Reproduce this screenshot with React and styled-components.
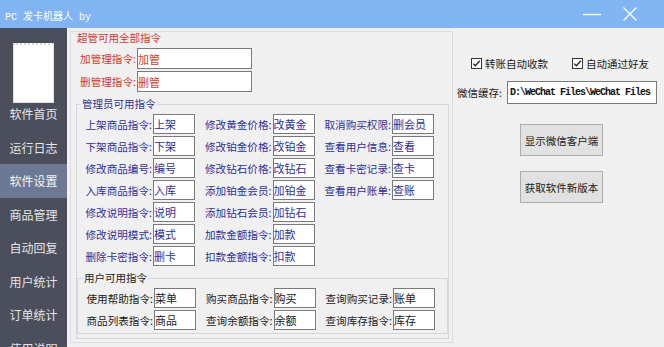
import styled, { createGlobalStyle } from 'styled-components';

const GlobalStyle = createGlobalStyle`
  html, body {
    margin: 0;
    padding: 0;
    background: #f0f0f0;
  }
  body {
    font-family: "Noto Sans CJK SC", "Noto Sans", sans-serif;
  }
`;

const TONES = {
  red: '#d03a2c',
  navy: '#2f2f98',
  plain: '#1a1a1a',
};

const Window = styled.div`
  width: 664px;
  height: 347px;
  display: flex;
  flex-direction: column;
  overflow: hidden;
  background: #f0f0f0;
`;

const TitleBar = styled.div`
  height: 28px;
  flex: none;
  display: flex;
  align-items: center;
  padding-left: 5px;
  background: #80b4f2;
  color: #fff;
`;

const Title = styled.div`
  flex: 1;
  padding-top: 3px;
  font-family: "Liberation Mono", "Noto Sans CJK SC", monospace;
  font-size: 10px;
  white-space: pre;
`;

const WinButtons = styled.div`
  display: flex;
  align-items: center;
  gap: 22px;
  padding-right: 27px;
`;

const Body = styled.div`
  flex: 1;
  display: flex;
  min-height: 0;
`;

const Sidebar = styled.nav`
  width: 67px;
  flex: none;
  display: flex;
  flex-direction: column;
  background: #4b4f5b;
`;

const Logo = styled.div`
  width: 41px;
  height: 60px;
  flex: none;
  margin: 15px 0 -6px 13px;
  box-sizing: border-box;
  background: #fff;
  border: 1px solid #e2e2e2;
  border-top: 2px dotted #d8d8d8;
`;

const NavItem = styled.div`
  height: 33.5px;
  flex: none;
  display: flex;
  align-items: center;
  justify-content: center;
  font-size: 12px;
  color: ${(p) => (p.$active ? '#f4f6fa' : '#e3e5ea')};
  background: ${(p) => (p.$active ? '#6c7994' : 'transparent')};
`;

const Main = styled.div`
  flex: 1;
  display: flex;
  align-items: flex-start;
`;

const SettingsPanel = styled.div`
  width: 383px;
  height: 312px;
  flex: none;
  box-sizing: border-box;
  margin: 3px 0 0 3px;
  padding: 0 3px 0 5px;
  border: 1px solid #dcdcdc;
  display: flex;
  flex-direction: column;
`;

const Heading = styled.div`
  margin-left: 1px;
  font-size: 10.5px;
  line-height: 12px;
  color: ${(p) => TONES[p.$tone]};
`;

const SuperRows = styled.div`
  display: flex;
  flex-direction: column;
  gap: 2px;
  margin: 4px 0 0 1px;
`;

const Group = styled.fieldset`
  margin: ${(p) => p.$margin};
  padding: 4px 0 ${(p) => p.$bottom}px 0;
  min-width: 0;
  border: 1px solid #d6d6d6;
`;

const GroupTitle = styled.legend`
  margin-left: ${(p) => p.$indent}px;
  padding: 0 1px;
  font-size: 10.5px;
  line-height: 12px;
  color: ${(p) => TONES[p.$tone]};
`;

const FieldGrid = styled.div`
  display: grid;
  grid-template-columns: repeat(3, 112px);
  grid-template-rows: repeat(${(p) => p.$rows}, 20px);
  grid-auto-flow: column;
  column-gap: 7.5px;
  row-gap: 2px;
  margin-left: 6px;
`;

const FieldRow = styled.div`
  display: flex;
  align-items: center;
`;

const FieldLabel = styled.span`
  width: ${(p) => p.$width}px;
  flex: none;
  padding-right: 1px;
  box-sizing: border-box;
  text-align: right;
  font-size: 10.6px;
  white-space: nowrap;
  color: ${(p) => TONES[p.$tone]};
`;

const TextBox = styled.input`
  width: ${(p) => p.$width}px;
  height: ${(p) => p.$height}px;
  flex: none;
  box-sizing: border-box;
  margin: 0;
  padding: 0;
  border: 1px solid #7a7a7a;
  background: #fff;
  outline: none;
  font-family: "Noto Sans CJK SC", sans-serif;
  font-size: 11px;
  color: ${(p) => TONES[p.$tone]};
`;

const SidePanel = styled.div`
  flex: 1;
  display: flex;
  flex-direction: column;
  padding-top: 28px;
`;

const CheckRow = styled.div`
  display: flex;
  align-items: center;
  gap: 24px;
  height: 14px;
  margin-left: 18px;
`;

const CheckItem = styled.label`
  display: flex;
  align-items: center;
  gap: 3px;
  font-size: 10.5px;
  color: #1a1a1a;
`;

const CacheRow = styled.div`
  display: flex;
  align-items: center;
  margin: 11px 0 0 4px;
`;

const CacheLabel = styled.span`
  width: 50px;
  font-size: 10.5px;
  color: #1a1a1a;
`;

const PathBox = styled.input`
  width: 150px;
  height: 23px;
  box-sizing: border-box;
  margin: 0;
  padding: 0 0 0 2px;
  border: 1px solid #7a7a7a;
  background: #fff;
  outline: none;
  font-family: "Liberation Mono", monospace;
  font-size: 10px;
  font-weight: bold;
  letter-spacing: -1px;
  color: #111;
`;

const Buttons = styled.div`
  display: flex;
  flex-direction: column;
  gap: 15px;
  margin: 20px 0 0 67px;
`;

const Button = styled.button`
  width: 83px;
  height: 32px;
  margin: 0;
  padding: 0;
  border: 1px solid #adadad;
  background: #e1e1e1;
  font-family: "Noto Sans CJK SC", sans-serif;
  font-size: 10.5px;
  color: #1a1a1a;
`;

const CheckBox = () => (
  <svg width="11" height="11" viewBox="0 0 11 11">
    <rect x="0.5" y="0.5" width="10" height="10" fill="#fff" stroke="#333" />
    <polyline points="2.2,5.6 4.4,7.8 8.8,2.8" fill="none" stroke="#222" strokeWidth="1.3" />
  </svg>
);

const Field = ({ label, value, tone, labelWidth = 70, inputWidth = 42, height = 20 }) => (
  <FieldRow>
    <FieldLabel $tone={tone} $width={labelWidth}>{label}:</FieldLabel>
    <TextBox $tone={tone} $width={inputWidth} $height={height} defaultValue={value} readOnly />
  </FieldRow>
);

const navItems = ['软件首页', '运行日志', '软件设置', '商品管理', '自动回复', '用户统计', '订单统计', '使用说明'];

const adminFields = [
  ['上架商品指令', '上架'],
  ['下架商品指令', '下架'],
  ['修改商品编号', '编号'],
  ['入库商品指令', '入库'],
  ['修改说明指令', '说明'],
  ['修改说明模式', '模式'],
  ['删除卡密指令', '删卡'],
  ['修改黄金价格', '改黄金'],
  ['修改铂金价格', '改铂金'],
  ['修改钻石价格', '改钻石'],
  ['添加铂金会员', '加铂金'],
  ['添加钻石会员', '加钻石'],
  ['加款金额指令', '加款'],
  ['扣款金额指令', '扣款'],
  ['取消购买权限', '删会员'],
  ['查看用户信息', '查看'],
  ['查看卡密记录', '查卡'],
  ['查看用户账单', '查账'],
];

const userFields = [
  ['使用帮助指令', '菜单'],
  ['商品列表指令', '商品'],
  ['购买商品指令', '购买'],
  ['查询余额指令', '余额'],
  ['查询购买记录', '账单'],
  ['查询库存指令', '库存'],
];

export default function App() {
  return (
    <>
      <GlobalStyle />
      <Window>
        <TitleBar>
          <Title>PC 发卡机器人 by</Title>
          <WinButtons>
            <svg width="18" height="14" viewBox="0 0 18 14">
              <line x1="0" y1="7.5" x2="18" y2="7.5" stroke="#fff" strokeWidth="1.5" />
            </svg>
            <svg width="14" height="14" viewBox="0 0 14 14">
              <path d="M0.5 0.5 L13.5 13.5 M13.5 0.5 L0.5 13.5" stroke="#fff" strokeWidth="1.3" />
            </svg>
          </WinButtons>
        </TitleBar>
        <Body>
          <Sidebar>
            <Logo />
            {navItems.map((item) => (
              <NavItem key={item} $active={item === '软件设置'}>{item}</NavItem>
            ))}
          </Sidebar>
          <Main>
            <SettingsPanel>
              <Heading $tone="red">超管可用全部指令</Heading>
              <SuperRows>
                <Field label="加管理指令" value="加管" tone="red" labelWidth={60} inputWidth={115} height={21} />
                <Field label="删管理指令" value="删管" tone="red" labelWidth={60} inputWidth={115} height={21} />
              </SuperRows>
              <Group $margin="6px 0 0 0" $bottom={4}>
                <GroupTitle $tone="navy" $indent={4}>管理员可用指令</GroupTitle>
                <FieldGrid $rows={7}>
                  {adminFields.map(([label, value]) => (
                    <Field key={label} label={label} value={value} tone="navy" />
                  ))}
                </FieldGrid>
                <Group $margin="6px 0 0 0" $bottom={3}>
                  <GroupTitle $tone="plain" $indent={5}>用户可用指令</GroupTitle>
                  <FieldGrid $rows={2}>
                    {userFields.map(([label, value]) => (
                      <Field key={label} label={label} value={value} tone="plain" />
                    ))}
                  </FieldGrid>
                </Group>
              </Group>
            </SettingsPanel>
            <SidePanel>
              <CheckRow>
                <CheckItem><CheckBox />转账自动收款</CheckItem>
                <CheckItem><CheckBox />自动通过好友</CheckItem>
              </CheckRow>
              <CacheRow>
                <CacheLabel>微信缓存:</CacheLabel>
                <PathBox defaultValue={'D:\\WeChat Files\\WeChat Files'} readOnly />
              </CacheRow>
              <Buttons>
                <Button>显示微信客户端</Button>
                <Button>获取软件新版本</Button>
              </Buttons>
            </SidePanel>
          </Main>
        </Body>
      </Window>
    </>
  );
}
